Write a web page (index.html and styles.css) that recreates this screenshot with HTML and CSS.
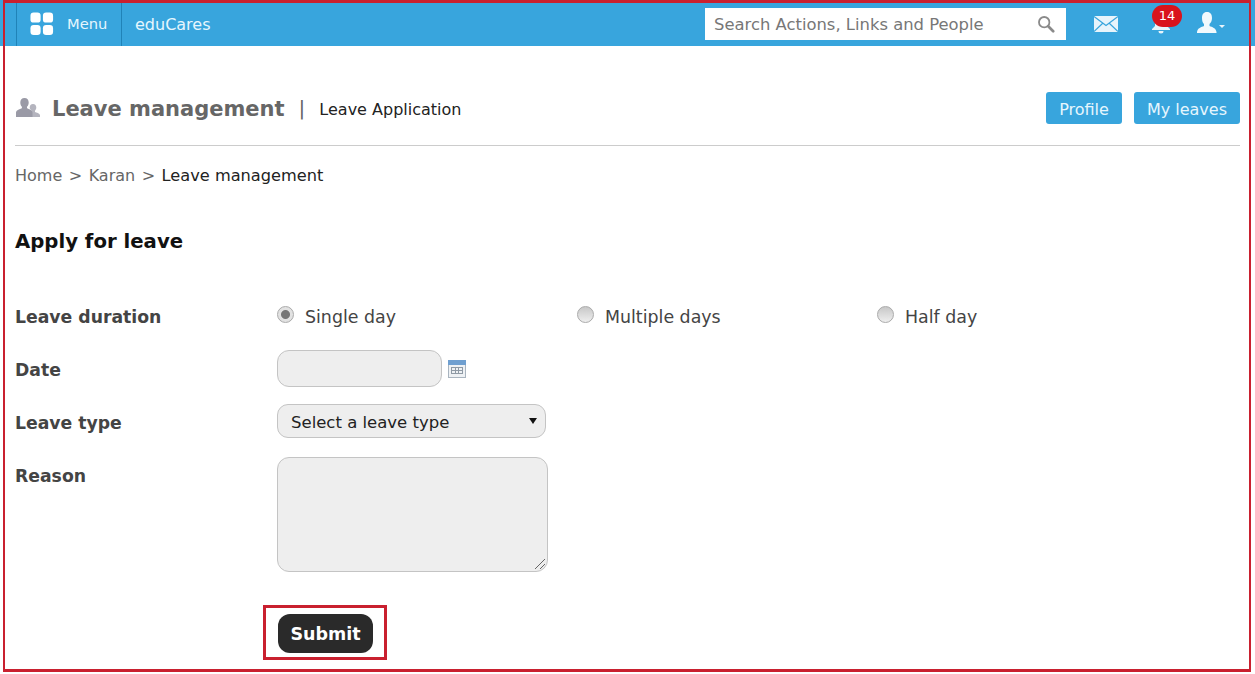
FILE: index.html
```html
<!DOCTYPE html>
<html lang="en">
<head>
  <meta charset="UTF-8" />
  <title>Leave management</title>
  <link rel="stylesheet" href="styles.css">
</head>
<body>
  <div class="frame"></div>

  <header class="topbar">
    <div class="menu-cell">
      <svg class="menu-icon" width="24" height="24" viewBox="0 0 26 26" fill="#fff">
        <rect x="0.5" y="0.5" width="11" height="11" rx="3.5"/>
        <rect x="14" y="0.5" width="11" height="11" rx="3.5"/>
        <rect x="0.5" y="14" width="11" height="11" rx="3.5"/>
        <rect x="14" y="14" width="11" height="11" rx="3.5"/>
      </svg>
      <span class="menu-label">Menu</span>
    </div>
    <div class="brand">eduCares</div>
    <div class="search">
      <span class="search-text">Search Actions, Links and People</span>
      <svg width="18" height="18" viewBox="0 0 20 20" fill="none" stroke="#8a8a8a">
        <circle cx="8" cy="8" r="5.8" stroke-width="2"/>
        <path d="M12.5 12.5l5.5 5.500" stroke-width="3" stroke-linecap="round"/>
      </svg>
    </div>
    <svg class="mail" width="24" height="16" viewBox="0 0 24 16">
      <rect width="24" height="16" fill="#e8f4fb"/>
      <path d="M0 0.5l12 9 12-9M0 15.5l9-8.5M24 15.5l-9-8.5" fill="none" stroke="#38a5dd" stroke-width="1.2"/>
    </svg>
    <div class="bell">
      <svg width="22" height="20" viewBox="0 0 22 20" fill="#e8f4fb">
        <path d="M11 1c4 0 6 3 6 7v4l3 3v1H2v-1l3-3V8c0-4 2-7 6-7zM8.500 17h5a2.500 2.500 0 0 1-5 0z"/>
      </svg>
      <span class="badge">14</span>
    </div>
    <div class="user">
      <svg width="20" height="22" viewBox="0 0 20 22" fill="#f2f9fd">
        <path d="M10 0c3.500 0 5 2.500 5 6 0 3-1.200 5-2.500 6v2c2.500 1 6.500 2 7 6v1H0v-1c.5-4 4.500-5 7-6v-2C5.700 11 5 9 5 6c0-3.500 1.500-6 5-6z"/>
      </svg>
      <span class="caret"></span>
    </div>
  </header>

  <main class="content">
    <div class="page-head">
      <svg class="people" width="24" height="20" viewBox="0 0 24 20" fill="#9a9aa6">
        <path d="M17 6c2.200 0 3.300 1.600 3.300 3.500 0 1.400-.6 2.500-1.300 3.200v1.300c1.500.6 4.500 1 5 3.300V19H13v-3c-.4-1-1-1.500-1.500-2 1.500-.4 3.300-.7 4-1.300-.8-.7-1.800-1.800-1.800-3.200C13.700 7.600 14.800 6 17 6z" fill="#b4b4be"/>
        <path d="M8.500 0c2.800 0 4.200 2 4.200 4.500 0 1.900-.7 3.300-1.700 4.200v1.500c2 .8 5 1.600 5.500 4.300V19H0v-4.500c.5-2.700 3.800-3.500 5.900-4.300V8.700C4.900 7.800 4.300 6.400 4.300 4.500 4.300 2 5.700 0 8.500 0z"/>
      </svg>
      <h1>Leave management</h1>
      <span class="divider">|</span>
      <span class="subtitle">Leave Application</span>
      <div class="head-buttons">
        <a class="btn-blue">Profile</a>
        <a class="btn-blue">My leaves</a>
      </div>
    </div>

    <nav class="crumbs">
      <span>Home</span><span>&gt;</span><span>Karan</span><span>&gt;</span><span class="current">Leave management</span>
    </nav>

    <h2>Apply for leave</h2>

    <form class="leave-form">
      <div class="row row-duration">
        <label>Leave duration</label>
        <div class="radios">
          <span class="radio-item"><i class="radio checked"></i>Single day</span>
          <span class="radio-item"><i class="radio"></i>Multiple days</span>
          <span class="radio-item"><i class="radio"></i>Half day</span>
        </div>
      </div>
      <div class="row row-date">
        <label>Date</label>
        <div class="date-wrap">
          <div class="field date-field"></div>
          <svg class="calendar" width="18" height="18" viewBox="0 0 18 18">
            <rect x="0.5" y="0.5" width="17" height="17" fill="#eef1f4" stroke="#a9b4bf"/>
            <rect width="18" height="5" fill="#6f9fd0"/>
            <path d="M3 7.500h12M3 10.500h12M3 13.500h12M3.500 7.500v6M7.500 7.500v6M10.500 7.500v6M14.500 7.500v6" stroke="#8f9aa5" fill="none"/>
          </svg>
        </div>
      </div>
      <div class="row row-type">
        <label>Leave type</label>
        <div class="field type-field">Select a leave type<span class="arrow"></span></div>
      </div>
      <div class="row row-reason">
        <label>Reason</label>
        <div class="field reason-field">
          <svg class="grip" width="12" height="12" viewBox="0 0 12 12" fill="none" stroke="#666">
            <path d="M1 11L11 1M6 11l5-5"/>
          </svg>
        </div>
      </div>
      <div class="submit-row">
        <button type="button" class="submit">Submit</button>
      </div>
    </form>
  </main>
</body>
</html>
```

FILE: styles.css
```css
* {
  box-sizing: border-box;
}

html, body {
  height: 100%;
}

body {
  margin: 0;
  font-family: "DejaVu Sans", Verdana, sans-serif;
  font-size: 16px;
  color: #333;
  background-color: #fff;
  overflow: hidden;
}

/* red annotation frame lying over the page */
.frame {
  position: absolute;
  left: 3px;
  top: 0;
  width: 1248px;
  height: 672px;
  border-style: solid;
  border-color: #c9202f;
  border-width: 3px 2px;
  pointer-events: none;
  z-index: 5;
}

.topbar {
  display: flex;
  align-items: center;
  height: 46px;
  padding-left: 16px;
  background-color: #38a5dd;
}

.menu-cell {
  display: flex;
  align-items: center;
  gap: 13px;
  width: 106px;
  height: 100%;
  padding-left: 13px;
  border-left: 1px solid #2083b8;
  border-right: 1px solid #2083b8;
  color: #e6f6fd;
  font-size: 14.7px;
}

.menu-icon {
  margin-top: 2px;
}

.menu-label {
  margin-top: 1px;
}

.brand {
  margin-left: 13px;
  margin-top: 3px;
  color: #e6f6fd;
  font-size: 16px;
}

.search {
  display: flex;
  align-items: center;
  justify-content: space-between;
  width: 361px;
  height: 32px;
  margin-left: auto;
  margin-top: 2px;
  padding: 0 11px 0 9px;
  background-color: #fff;
  color: #777;
}

.search-text {
  font-size: 16.4px;
}

.mail {
  margin-left: 28px;
  margin-top: 2px;
}

.bell {
  position: relative;
  display: flex;
  width: 22px;
  margin-left: 32px;
  margin-top: 2px;
}

.badge {
  position: absolute;
  left: 2px;
  top: -9px;
  width: 30px;
  height: 22px;
  border-radius: 11px;
  background-color: #d9131c;
  color: #fff;
  font-size: 13px;
  line-height: 21px;
  text-align: center;
}

.user {
  display: flex;
  align-items: center;
  gap: 2px;
  margin-left: 25px;
  margin-right: 30px;
}

.caret {
  margin-top: 6px;
  border-top: 3px solid #e8f4fb;
  border-left: 3px solid transparent;
  border-right: 3px solid transparent;
}

.content {
  padding: 46px 15px 0;
}

.page-head {
  display: flex;
  align-items: center;
  height: 54px;
  padding-bottom: 21px;
  border-bottom: 1px solid #ccc;
}

.people {
  margin-left: 1px;
}

h1 {
  margin: 2px 0 0 12px;
  color: #666;
  font-size: 21px;
  font-weight: bold;
}

.divider {
  margin-left: 14px;
  color: #666;
  font-size: 20px;
}

.subtitle {
  margin-left: 14px;
  margin-top: 2px;
  color: #222;
}

.head-buttons {
  display: flex;
  gap: 12px;
  margin-left: auto;
}

.btn-blue {
  display: block;
  height: 32px;
  padding: 0 13px;
  border-radius: 3px;
  background-color: #38a5dd;
  color: #e6f6fd;
  line-height: 36px;
}

.crumbs {
  display: flex;
  gap: 6.5px;
  margin-top: 20px;
  color: #666;
  line-height: 20px;
}

.crumbs .current {
  color: #222;
  font-size: 16.2px;
}

h2 {
  margin: 44px 0 0;
  color: #111;
  font-size: 19.7px;
  font-weight: bold;
  line-height: 24px;
}

.leave-form {
  margin-top: 37px;
}

.row {
  display: flex;
}

.row label {
  flex: 0 0 262px;
  color: #444;
  font-size: 17.25px;
  font-weight: bold;
  line-height: 53px;
}

.row-duration {
  height: 53px;
  margin-top: 3px;
}

.radios {
  display: flex;
  color: #444;
  font-size: 17.4px;
  line-height: 53px;
  height: 53px;
}

.radio-item {
  display: flex;
  align-items: center;
  width: 300px;
}

.radio {
  display: block;
  width: 17px;
  height: 17px;
  margin-right: 11px;
  margin-top: -7px;
  border: 1px solid #aaa;
  border-radius: 50%;
  background: linear-gradient(#c8c8c8, #eee);
}

.radio.checked {
  background: radial-gradient(circle, #777 0, #777 4px, #e2e2e2 5px);
}

.field {
  border: 1px solid #c4c4c4;
  background-color: #eee;
}

.row-date {
  height: 53px;
}

.date-wrap {
  display: flex;
  align-items: center;
  gap: 6px;
  height: 37px;
  margin-top: 6px;
}

.date-field {
  width: 165px;
  height: 37px;
  border-radius: 12px;
}

.row-type {
  height: 53px;
}

.type-field {
  position: relative;
  width: 269px;
  height: 34px;
  margin-top: 7px;
  padding-left: 13px;
  border-radius: 11px;
  color: #222;
  font-size: 16.5px;
  line-height: 35px;
}

.arrow {
  position: absolute;
  right: 8px;
  top: 13px;
  border-top: 6px solid #111;
  border-left: 4px solid transparent;
  border-right: 4px solid transparent;
}

.row-reason {
  height: 122px;
}

.row-reason label {
  line-height: 52px;
}

.reason-field {
  position: relative;
  width: 271px;
  height: 115px;
  margin-top: 7px;
  border-radius: 12px;
}

.grip {
  position: absolute;
  right: 1px;
  bottom: 1px;
}

/* red highlight box around the submit button */
.submit-row {
  width: 124px;
  height: 55px;
  margin-top: 33px;
  margin-left: 248px;
  padding: 6px 12px;
  border: 3px solid #c9202f;
}

.submit {
  display: block;
  width: 95px;
  height: 39px;
  padding: 0;
  border: none;
  border-radius: 12px;
  background-color: #2a2a2a;
  color: #fff;
  font-family: inherit;
  font-size: 17.5px;
  font-weight: bold;
}
```
